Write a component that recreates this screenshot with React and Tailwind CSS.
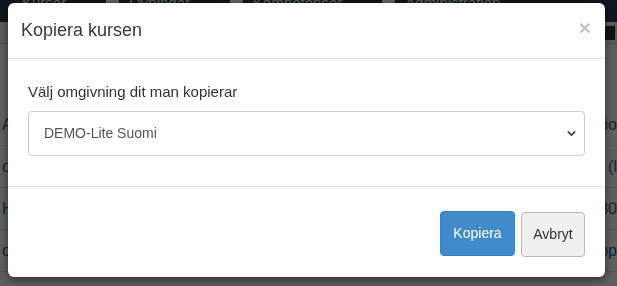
import { ChevronDown } from 'lucide-react';

const navItems = ['Kurser', 'Övningar', 'Kompetenser', 'Administration'];

function BackgroundPage() {
  return (
    <div className="h-[286px] w-[617px] overflow-hidden bg-white font-['Liberation_Sans',Arial,sans-serif]">
      {/* top nav, mostly scrolled away */}
      <div className="flex h-[22px] items-start gap-[40px] bg-[#2b3b52] pl-[22px] text-[15px] text-white">
        {navItems.map((item, i) => (
          <div key={item} className="-mt-[8px] flex items-center gap-[10px]">
            {i > 0 && <span className="h-[12px] w-[13px] rounded-[2px] bg-white" />}
            <span>{item}</span>
          </div>
        ))}
      </div>
      {/* toolbar */}
      <div className="flex h-[22px] items-center justify-end border-b border-[#ccc] bg-[#f5f5f5] pr-[2px]">
        <span className="h-[14px] w-[12px] bg-[#333]" />
      </div>
      {/* table rows behind the dialog */}
      <div className="mt-[60px] flex flex-col text-[16px] text-[#2a6aa6]">
        {[
          ['A', 'io'],
          ['oc', '(l'],
          ['H', '30'],
          ['o', 'op'],
        ].map(([l, r], i) => (
          <div key={i} className="flex h-[42px] items-center justify-between border-b border-[#e5e5e5] pl-[2px]">
            <span>{l}</span>
            <span>{r}</span>
          </div>
        ))}
      </div>
    </div>
  );
}

export default function App() {
  return (
    <div className="relative h-[286px] w-[617px] overflow-hidden">
      <BackgroundPage />
      <div className="fixed inset-0 bg-black/[0.63]" />

      {/* Modal */}
      <div className="fixed left-[8px] top-[3px] w-[597px] rounded-[6px] bg-white font-['Liberation_Sans',Arial,sans-serif] shadow-[0_3px_9px_rgba(0,0,0,0.5)]">
        <div className="flex h-[56px] items-center justify-between border-b border-[#e5e5e5] pl-[13px] pr-[14px]">
          <h4 className="text-[18px] text-[#3a3a3a]">Kopiera kursen</h4>
          <button className="-mt-[6px] text-[21px] font-bold leading-none text-[#c4c4c4]">×</button>
        </div>

        <div className="border-b border-[#e5e5e5] px-[20px] pb-[30px] pt-[22px]">
          <label className="block text-[15px] text-[#333]">Välj omgivning dit man kopierar</label>
          <div className="mt-[7px] flex h-[45px] items-center justify-between rounded-[4px] border border-[#ccc] pl-[15px] pr-[6px] text-[14px] text-[#555]">
            <span>DEMO-Lite Suomi</span>
            <ChevronDown size={13} strokeWidth={3} className="text-[#444]" />
          </div>
        </div>

        <div className="flex justify-end gap-[6px] px-[20px] pb-[20px] pt-[24px] text-[14px]">
          <button className="h-[45px] w-[75px] rounded-[4px] border border-[#357ebd] bg-[#428bca] text-white">Kopiera</button>
          <button className="mt-[1px] h-[45px] w-[64px] rounded-[4px] border border-[#b8b8b8] bg-[#f0f0f0] text-[#333]">Avbryt</button>
        </div>
      </div>
    </div>
  );
}
